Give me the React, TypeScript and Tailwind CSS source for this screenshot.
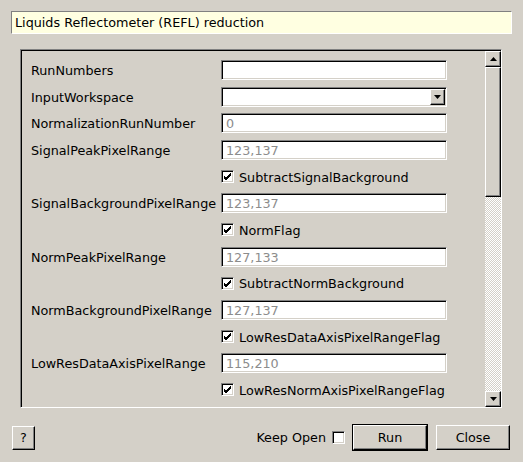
import React from 'react';

type Row =
  | { kind: 'input'; label: string; value: string }
  | { kind: 'combo'; label: string }
  | { kind: 'check'; label: string };

const rows: Row[] = [
  { kind: 'input', label: 'RunNumbers', value: '' },
  { kind: 'combo', label: 'InputWorkspace' },
  { kind: 'input', label: 'NormalizationRunNumber', value: '0' },
  { kind: 'input', label: 'SignalPeakPixelRange', value: '123,137' },
  { kind: 'check', label: 'SubtractSignalBackground' },
  { kind: 'input', label: 'SignalBackgroundPixelRange', value: '123,137' },
  { kind: 'check', label: 'NormFlag' },
  { kind: 'input', label: 'NormPeakPixelRange', value: '127,133' },
  { kind: 'check', label: 'SubtractNormBackground' },
  { kind: 'input', label: 'NormBackgroundPixelRange', value: '127,137' },
  { kind: 'check', label: 'LowResDataAxisPixelRangeFlag' },
  { kind: 'input', label: 'LowResDataAxisPixelRange', value: '115,210' },
  { kind: 'check', label: 'LowResNormAxisPixelRangeFlag' },
  // only the top edge of this one shows inside the scroll area
  { kind: 'input', label: '', value: '' },
];

// sunken 2px bevel (gray/black top-left, white/face bottom-right)
const sunken =
  'border border-t-[#808080] border-l-[#808080] border-b-white border-r-white shadow-[inset_1px_1px_0_#000,inset_-1px_-1px_0_#d4d0c8]';
// raised 2px bevel
const raised =
  'border border-t-white border-l-white border-b-black border-r-black shadow-[inset_-1px_-1px_0_#808080]';

const Checkbox: React.FC<{ checked?: boolean }> = ({ checked }) => (
  <div className={`h-[13px] w-[13px] shrink-0 bg-white ${sunken} flex items-center justify-center`}>
    {checked && (
      <svg width="9" height="9" viewBox="0 0 9 9">
        <path d="M1 4 L3 6 L8 1 M1 5 L3 7 L8 2 M1 6 L3 8 L8 3" stroke="#000" strokeWidth="1" fill="none" shapeRendering="crispEdges" />
      </svg>
    )}
  </div>
);

const Arrow: React.FC<{ up?: boolean }> = ({ up }) => (
  <svg width="7" height="4" viewBox="0 0 7 4">
    <path d={up ? 'M3.5 0 L7 4 L0 4 Z' : 'M0 0 L7 0 L3.5 4 Z'} fill="#000" />
  </svg>
);

export default function App() {
  return (
    <div className="h-[462px] w-[523px] overflow-hidden bg-[#d4d0c8] pl-[11px] pt-[11px] font-['DejaVu_Sans',sans-serif] text-[12.75px] text-black">
      {/* header */}
      <div className="flex h-[23px] w-[501px] items-center border border-t-[#808080] border-l-[#808080] border-b-white border-r-white bg-[#ffffe1] pl-[3px] pt-[1px]">
        Liquids Reflectometer (REFL) reduction
      </div>

      {/* scroll area */}
      <div className="ml-[9px] mt-[15px] flex h-[359px] w-[482px] border border-t-[#808080] border-l-[#808080] border-b-white border-r-white">
        <div className="flex flex-1 border-l border-t border-l-black border-t-black">
          <div className="flex flex-1 flex-col gap-[6.67px] overflow-hidden pl-[9px] pt-[9px]">
            {rows.map((row, i) => (
              <div key={i} className="flex h-[20px] shrink-0 items-center">
                <div className="w-[190px] shrink-0 pt-[1px]">{row.kind !== 'check' ? row.label : ''}</div>
                {row.kind === 'input' && (
                  <div className={`flex h-[20px] w-[226px] items-center bg-white pl-[4px] pt-[1px] text-[#8c8c8c] ${sunken}`}>
                    {row.value}
                  </div>
                )}
                {row.kind === 'combo' && (
                  <div className={`flex h-[20px] w-[226px] items-center justify-end bg-white pr-[1px] ${sunken}`}>
                    <div className={`flex h-[16px] w-[15px] items-center justify-center bg-[#d4d0c8] ${raised}`}>
                      <Arrow />
                    </div>
                  </div>
                )}
                {row.kind === 'check' && (
                  <div className="flex items-center gap-[5px]">
                    <Checkbox checked />
                    <span className="pt-[1px]">{row.label}</span>
                  </div>
                )}
              </div>
            ))}
          </div>

          {/* scrollbar */}
          <div className="flex w-[16px] flex-col">
            <div className={`flex h-[16px] items-center justify-center bg-[#d4d0c8] ${raised}`}>
              <Arrow up />
            </div>
            <div className={`h-[130px] bg-[#d4d0c8] ${raised}`} />
            <div className="flex-1 bg-[repeating-conic-gradient(#d4d0c8_0_25%,#ffffff_0_50%)] bg-[length:2px_2px]" />
            <div className={`flex h-[16px] items-center justify-center bg-[#d4d0c8] ${raised}`}>
              <Arrow />
            </div>
          </div>
        </div>
      </div>

      {/* bottom buttons */}
      <div className="mt-[16px] flex h-[27px] w-[499px] items-center">
        <button className={`ml-[1px] flex h-[24px] w-[23px] items-center justify-center bg-[#d4d0c8] ${raised}`}>
          ?
        </button>
        <div className="flex-1" />
        <span className="pt-[1px]">Keep Open</span>
        <div className="ml-[6px]">
          <Checkbox />
        </div>
        <div className="ml-[7px] h-[27px] w-[76px] border border-black">
          <button className={`flex h-full w-full items-center justify-center bg-[#d4d0c8] pt-[1px] ${raised}`}>Run</button>
        </div>
        <button className={`ml-[8px] flex h-[25px] w-[74px] items-center justify-center bg-[#d4d0c8] pt-[1px] ${raised}`}>
          Close
        </button>
      </div>
    </div>
  );
}
